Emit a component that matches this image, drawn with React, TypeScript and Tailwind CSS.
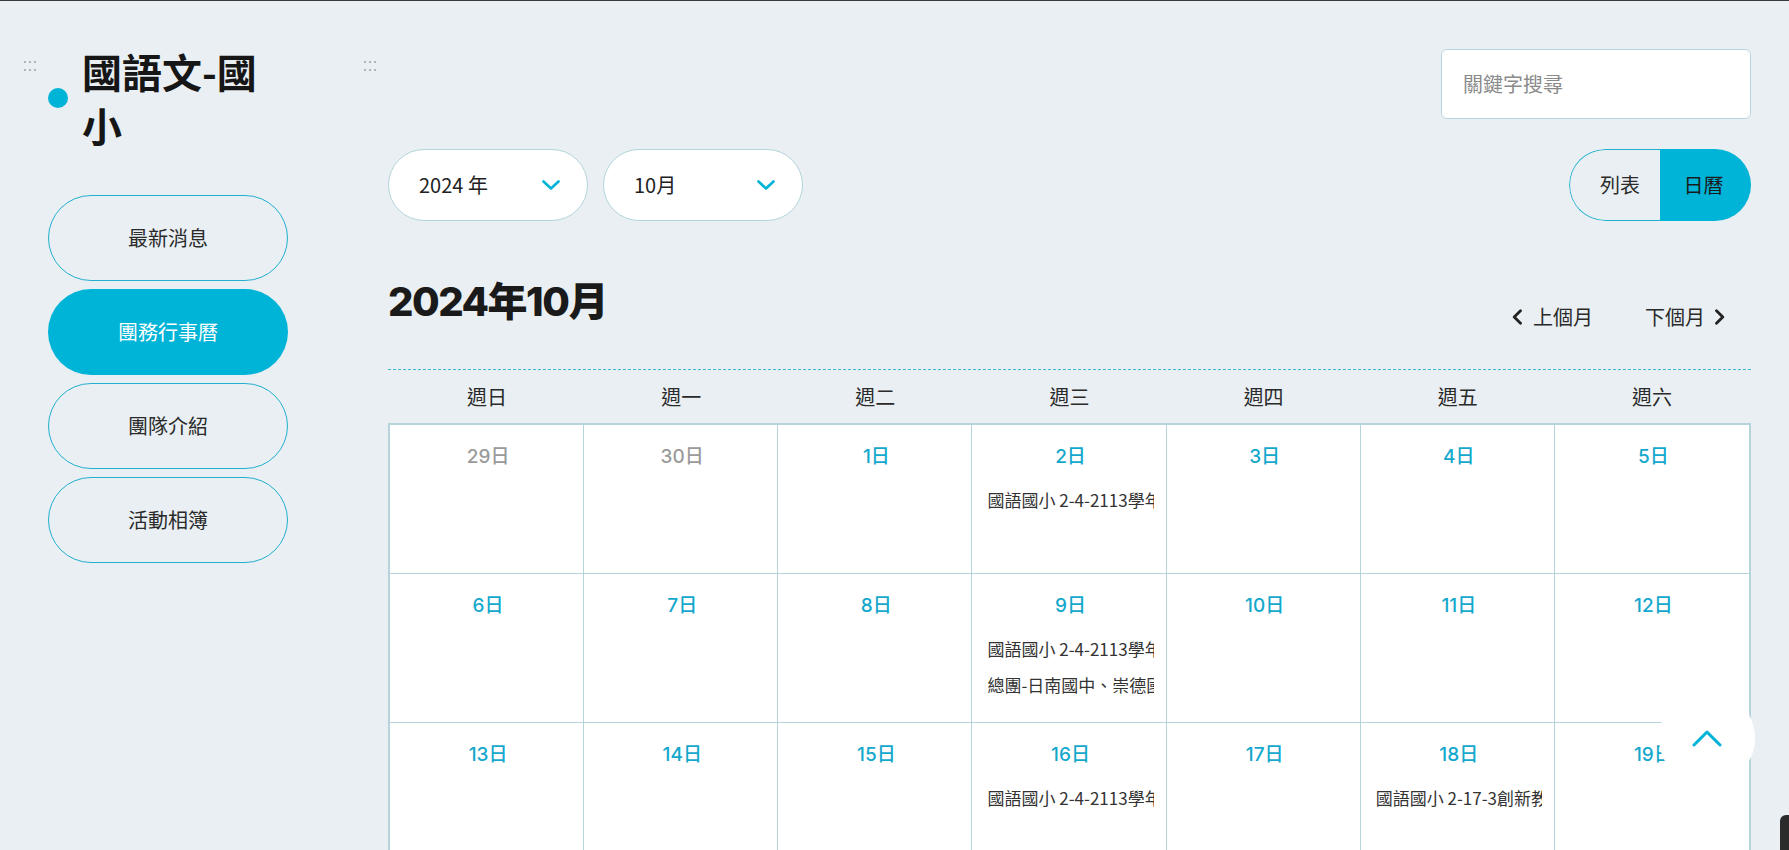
import React from "react";

const CYAN = "#00b4d8";

function Handle({ className = "" }: { className?: string }) {
  return (
    <div className={`grid h-[10px] w-[12px] shrink-0 grid-cols-3 gap-x-[3px] gap-y-[6px] ${className}`}>
      {Array.from({ length: 6 }).map((_, i) => (
        <span key={i} className="h-[2px] w-[2px] rounded-full bg-[#9aa1a6]" />
      ))}
    </div>
  );
}

function ChevronDown() {
  return (
    <svg width="18" height="10" viewBox="0 0 18 10" fill="none">
      <path d="M1.5 1.5 L9 8.5 L16.5 1.5" stroke={CYAN} strokeWidth="2.6" strokeLinecap="round" strokeLinejoin="round" />
    </svg>
  );
}

function ChevronLeft() {
  return (
    <svg width="12" height="16" viewBox="0 0 12 16" fill="none">
      <path d="M9.5 1.8 L3.2 8 L9.5 14.2" stroke="#222" strokeWidth="2.8" strokeLinecap="round" strokeLinejoin="round" />
    </svg>
  );
}

function ChevronRight() {
  return (
    <svg width="12" height="16" viewBox="0 0 12 16" fill="none">
      <path d="M2.5 1.8 L8.8 8 L2.5 14.2" stroke="#222" strokeWidth="2.8" strokeLinecap="round" strokeLinejoin="round" />
    </svg>
  );
}

type Day = { d: number; muted?: boolean; events?: string[] };

const weeks: Day[][] = [
  [
    { d: 29, muted: true },
    { d: 30, muted: true },
    { d: 1 },
    { d: 2, events: ["國語國小 2-4-2113學年度國語文教學研討"] },
    { d: 3 },
    { d: 4 },
    { d: 5 },
  ],
  [
    { d: 6 },
    { d: 7 },
    { d: 8 },
    { d: 9, events: ["國語國小 2-4-2113學年度國語文教學研討", "總團-日南國中、崇德國小共備"] },
    { d: 10 },
    { d: 11 },
    { d: 12 },
  ],
  [
    { d: 13 },
    { d: 14 },
    { d: 15 },
    { d: 16, events: ["國語國小 2-4-2113學年度國語文教學研討"] },
    { d: 17 },
    { d: 18, events: ["國語國小 2-17-3創新教學分享"] },
    { d: 19 },
  ],
  [
    { d: 20 },
    { d: 21 },
    { d: 22 },
    { d: 23 },
    { d: 24 },
    { d: 25 },
    { d: 26 },
  ],
  [
    { d: 27 },
    { d: 28 },
    { d: 29 },
    { d: 30 },
    { d: 31 },
    { d: 1, muted: true },
    { d: 2, muted: true },
  ],
];

const weekdays = ["週日", "週一", "週二", "週三", "週四", "週五", "週六"];
const navItems = ["最新消息", "團務行事曆", "團隊介紹", "活動相簿"];

export default function App() {
  return (
    <div className="relative h-[850px] overflow-hidden border-t border-[#3a3a3a] bg-[#e9eff2] font-['Noto_Sans_CJK_TC','Noto_Sans',sans-serif] text-[#222]">
      <div className="flex pl-6 pr-[38px]">
        {/* Sidebar */}
        <aside className="flex w-[264px] shrink-0 gap-[12px]">
          <Handle className="mt-[60px]" />
          <div className="w-[240px]">
            <div className="mt-[43px] flex items-center gap-[14px]">
              <span className="h-5 w-5 shrink-0 rounded-full bg-[#00b4d8]" />
              <h1 className="text-[40px] font-bold leading-[54px] text-[#161616]">國語文-國小</h1>
            </div>
            <nav className="mt-[43px] flex flex-col gap-2">
              {navItems.map((item) => {
                const active = item === "團務行事曆";
                return (
                  <div
                    key={item}
                    className={
                      active
                        ? "flex h-[86px] items-center justify-center rounded-full bg-[#00b4d8] text-[20px] text-white"
                        : "flex h-[86px] items-center justify-center rounded-full border border-[#22b0d0] text-[20px] text-[#2a2a2a]"
                    }
                  >
                    {item}
                  </div>
                );
              })}
            </nav>
          </div>
        </aside>

        {/* Main */}
        <main className="ml-[76px] flex min-w-0 flex-1 gap-[12px]">
          <Handle className="mt-[60px]" />
          <div className="min-w-0 flex-1 pt-[48px]">
            <div className="flex justify-end">
              <div className="flex h-[70px] w-[310px] items-center rounded-md border border-[#b7d6de] bg-white pl-[21px] text-[20px] text-[#8a8a8a]">
                關鍵字搜尋
              </div>
            </div>

            <div className="mt-[30px] flex items-center justify-between">
              <div className="flex gap-[15px]">
                <div className="flex h-[72px] w-[200px] items-center justify-between rounded-full border border-[#b3d5dc] bg-white pl-[30px] pr-[27px] text-[20px] text-[#222]">
                  <span>2024 年</span>
                  <ChevronDown />
                </div>
                <div className="flex h-[72px] w-[200px] items-center justify-between rounded-full border border-[#b3d5dc] bg-white pl-[30px] pr-[27px] text-[20px] text-[#222]">
                  <span>10月</span>
                  <ChevronDown />
                </div>
              </div>
              <div className="flex h-[72px] w-[182px] overflow-hidden rounded-full">
                <div className="flex w-[91px] items-center justify-center rounded-l-full border-y border-l border-[#22b0d0] pl-[10px] text-[20px] text-[#2a2a2a]">
                  列表
                </div>
                <div className="flex w-[91px] items-center justify-center bg-[#00b4d8] pr-[4px] text-[20px] text-[#1a1a1a]">
                  日曆
                </div>
              </div>
            </div>

            <div className="mt-[57px] flex items-start justify-between">
              <h2 className="font-['Inter','Noto_Sans_CJK_TC',sans-serif] text-[40px] font-extrabold leading-[48px] tracking-[-1.5px] text-[#1a1a1a]">
                2024年10月
              </h2>
              <div className="mr-[25px] mt-[27px] flex items-center gap-[52px] text-[20px] leading-[24px] text-[#2a2a2a]">
                <div className="flex items-center gap-[10px]">
                  <ChevronLeft />
                  <span>上個月</span>
                </div>
                <div className="flex items-center gap-[9px]">
                  <span>下個月</span>
                  <ChevronRight />
                </div>
              </div>
            </div>

            <div className="mt-[40px] border-t border-dashed border-[#3fb6d0]" />

            <div className="grid h-[53px] grid-cols-7 px-[2px]">
              {weekdays.map((w) => (
                <div key={w} className="flex items-center justify-center text-[20px] text-[#2a2a2a]">
                  {w}
                </div>
              ))}
            </div>

            <div className="grid grid-cols-7 border-2 border-[#b5d4dc] bg-white">
              {weeks.flat().map((day, i) => (
                <div
                  key={i}
                  className={
                    i % 7 === 6
                      ? "h-[149px] min-w-0 border-b border-[#b5d4dc] pl-[15px] pr-[12px] pt-[17px]"
                      : "h-[149px] min-w-0 border-b border-r border-[#b5d4dc] pl-[15px] pr-[12px] pt-[17px]"
                  }
                >
                  <div
                    className={
                      day.muted
                        ? "text-center font-['Inter','Noto_Sans_CJK_TC',sans-serif] text-[19px] font-medium leading-[30px] text-[#9a9a9a]"
                        : "text-center font-['Inter','Noto_Sans_CJK_TC',sans-serif] text-[19px] font-medium leading-[30px] text-[#14a8cc]"
                    }
                  >
                    {day.d}日
                  </div>
                  {day.events && (
                    <div className="mt-[10px]">
                      {day.events.map((e, j) => (
                        <div key={j} className="overflow-hidden whitespace-nowrap text-[17px] leading-[36px] text-[#333]">
                          {e}
                        </div>
                      ))}
                    </div>
                  )}
                </div>
              ))}
            </div>
          </div>
        </main>
      </div>

      {/* Back to top */}
      <div className="fixed bottom-[64px] right-[34px] flex h-[96px] w-[96px] items-center justify-center rounded-full bg-white">
        <svg width="30" height="17" viewBox="0 0 30 17" fill="none">
          <path d="M2 15 L15 2 L28 15" stroke={CYAN} strokeWidth="3" strokeLinecap="round" strokeLinejoin="round" />
        </svg>
      </div>

      {/* Chat widget edge */}
      <div className="fixed bottom-0 right-0 h-[35px] w-[9px] rounded-tl-[6px] bg-[#2b2b2b]" />
    </div>
  );
}
